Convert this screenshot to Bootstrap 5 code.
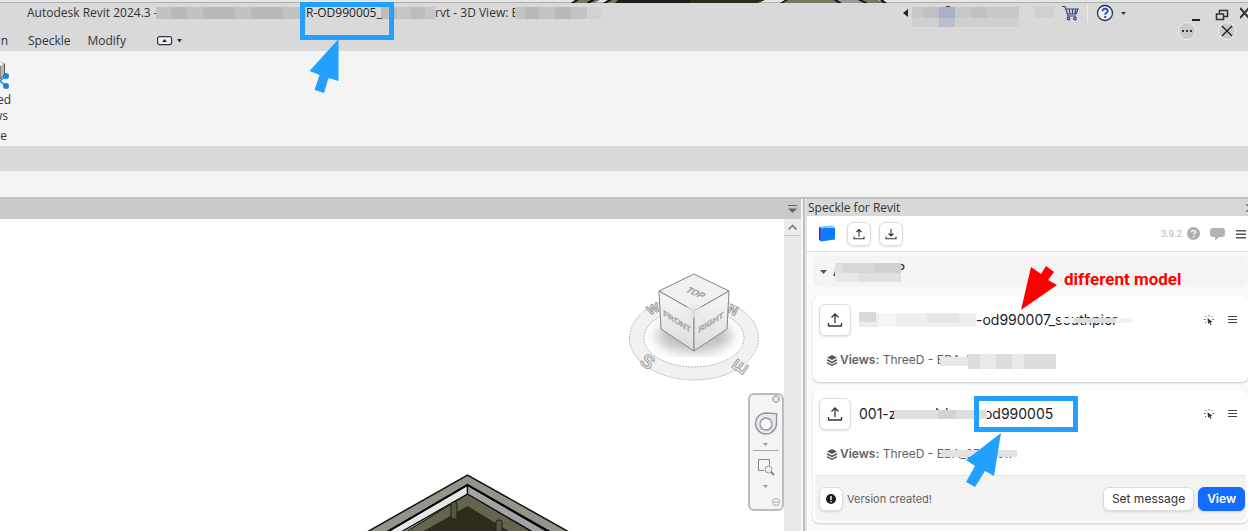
<!DOCTYPE html>
<html lang="en">
<head>
<meta charset="utf-8">
<meta name="viewport" content="width=device-width, initial-scale=1">
<title>Autodesk Revit 2024.3 - Speckle for Revit</title>
<link href="https://cdn.jsdelivr.net/npm/bootstrap@5.3.0/dist/css/bootstrap.min.css" rel="stylesheet">
<style>
  body { font-family: "Open Sans", "Noto Sans", sans-serif; font-size: 12px; line-height: 16px; color: #333; background: #f4f4f4; }
  svg { display: block; flex: none; }
  button { color: inherit; }
  a { color: inherit; text-decoration: none; }
  .bare { background: none; border: 0; padding: 0; display: flex; align-items: center; justify-content: center; }
  .backdrop { height: 3px; background: #e6e6e6; border-bottom: 1px solid #b0b0b0; }
  .app-head { background: #d9d9d9; height: 48px; }
  .title-row { height: 20px; padding-left: 27px; white-space: nowrap; }
  .menu-row { height: 28px; gap: 20px; padding-top: 8px; }
  .title-file { width: 75px; color: #222; }
  .win-tools { height: 20px; }
  .round-btn { width: 18px; height: 18px; border-radius: 50%; background: #cacaca; border: 1px solid #f0f0f0; margin-top: -20px; }
  .ribbon { height: 95px; background: #f4f4f4; }
  .band { height: 25px; background: #d9d9d9; }
  .options { height: 26px; background: #f4f4f4; }
  .work { border-top: 2px solid #c0c0c0; }
  .tab-strip { height: 20px; background: #cacaca; padding-right: 4px; }
  .canvas { background: #fff; }
  .scroller { width: 17px; background: #e8e8e8; }
  .scroller button { width: 17px; height: 17px; border-bottom: 1px solid #ccc; background: #ececec; }
  .gutter { width: 4px; background: #c0c0c0; border-left: 2px solid #f4f4f4; }
  .side { width: 443px; background: #fafafa; border-left: 2px solid #e4e4e4; }
  .side-title { height: 17px; background: #d8d8d8; padding-left: 1px; }
  .panel-font { font-family: Inter, sans-serif; }
  .side-head { height: 36px; background: #fff; border-bottom: 1px solid #dedede; padding: 0 2px 0 12px; }
  .tool-btn { background: #fff; border: 1px solid #dcdcdc; border-radius: 6px; padding: 0; box-shadow: 0 1px 2px rgba(0,0,0,.12); display: flex; align-items: center; justify-content: center; flex: none; }
  .s24 { width: 24px; height: 24px; }
  .s32 { width: 32px; height: 32px; }
  .version { font-size: 9px; color: #b5b5b5; }
  .side-body { padding: 4px 0 0 6px; }
  .group-row { height: 31px; background: #f4f4f4; border-radius: 6px; padding-left: 7px; margin-bottom: 9px; }
  .group-name { font-size: 12px; font-weight: 500; margin-left: 6px; width: 72px; }
  .model-card { background: #fff; border: 1px solid #fff; border-radius: 6px; box-shadow: 0 1px 2px rgba(0,0,0,.2); }
  .model-card + .model-card { margin-top: 8px; }
  .model-main { padding: 7px 9px 0 5px; height: 84px; }
  .model-name { font-size: 14px; line-height: 20px; color: #1c1c1e; white-space: nowrap; }
  .views { margin: 16px 0 0 8px; gap: 3px; color: #626263; white-space: nowrap; }
  .card-foot { background: #f3f3f3; border-top: 1px solid #e6e6e6; height: 46px; padding: 0 1px 0 4px; gap: 4px; margin: 0 1px 1px; border-radius: 0 0 6px 6px; }
  .foot-text { font-size: 11px; color: #626263; }
  .foot-btn { font-size: 12px; line-height: 16px; padding: 3px 8px; border-radius: 6px; height: 24px; }
  .foot-btn.go { background: #136cff; border-color: #136cff; color: #fff; font-weight: 600; }
  .over { position: absolute; overflow: visible; }
  .note { position: absolute; left: 257px; top: 16px; font: 700 17px/22px Roboto, sans-serif; color: #f00; white-space: nowrap; z-index: 3; }
  .ring-box { position: absolute; border: 5px solid #22a0ff; z-index: 3; }
  .nav-tool { position: absolute; right: 0; top: 174px; width: 36px; height: 118px; border: 2px solid #bcbcbc; border-radius: 6px; background: #f4f4f4; }
</style>
</head>
<body class="d-flex flex-column min-vh-100 overflow-hidden">
<svg class="over" style="left:570px;top:0" width="320" height="3" viewBox="570 0 320 3" aria-hidden="true"><path d="M571 3l5-3h24l-6 3zM603 3l5-3h14l-6 3zM780 3l6-3h92l8 3z" fill="#77775f"/><path d="M618 0h75v3h-78z" fill="#1c1c18"/><path d="M690 0h75l-7 3h-68z" fill="#2e2c1b"/><path d="M838 0h22l5 3h-25z" fill="#999"/><path d="M571 3l4-3h4l-5 3zM586 3l5-3h4l-5 3zM603 3l5-3h4l-5 3zM780 3l5-3h3l-5 3zM834 0h3l5 3h-4zM858 0h4l6 3h-4zM880 0h3l4 3h-4z" fill="#111"/></svg>
<div class="backdrop"></div>
<header class="app-head">
  <div class="title-row d-flex align-items-center position-relative">
    <span style="width:129px">Autodesk Revit 2024.3 -</span>
    <svg width="150" height="12" viewBox="0 0 150 12" aria-hidden="true"><path fill="#c2c2c2" d="M0 0h150v12H0z"/><path fill="#b8b8b8" d="M15 0h16v12H15zM47 0h32v12H47zM95 0h32v12H95z"/></svg>
    <span class="title-file position-relative">R-OD990005_
      <span class="ring-box" style="left:-6px;top:-3px;width:94px;height:38px"></span>
      <svg class="over" style="left:3px;top:33px;z-index:3" width="30" height="56" viewBox="309 38 30 56" aria-hidden="true"><path fill="#22a0ff" d="M338.500 39v42l-10-3-4.500 15-9.500-3 5-15-10-4z"/></svg>
    </span>
    <svg width="54" height="12" viewBox="0 0 54 12" aria-hidden="true"><path fill="#c6c6c6" d="M0 0h54v12H0z"/><path fill="#bcbcbc" d="M0 0h16v12H0zM30 0h14v12H30z"/></svg>
    <span style="width:80px">rvt - 3D View: E</span>
    <svg width="86" height="12" viewBox="0 0 86 12" aria-hidden="true"><path fill="#c4c4c4" d="M0 0h72v12H0z"/><path fill="#b8b8b8" d="M10 0h14v12H10zM40 0h16v12H40z"/><path fill="#d2d2d2" d="M72 0h14v12H72z"/></svg>
    <div class="win-tools d-flex align-items-center ms-auto">
      <button class="bare" aria-label="Collapse"><svg width="5" height="8" viewBox="0 0 5 8"><path d="M5 0v8L0 4z" fill="#222"/></svg></button>
      <svg class="ms-1" width="142" height="20" viewBox="0 0 142 20" overflow="visible" aria-hidden="true"><path fill="#c8c8c8" d="M0 4h107v11H0z"/><path fill="#ced0d0" d="M0 15h27v9H0zM43 15h64v9H43z"/><path fill="#a9b1c8" d="M27 4h16v11H27z"/><path fill="#b9bfd0" d="M27 15h16v9H27z"/><path fill="#bfc0c0" d="M11 4h16v11H11zM59 4h16v11H59z"/><path fill="#d0d0d0" d="M123 4h19v11h-19z"/><path fill="#222" d="M33 4q3-2 6 0z"/></svg>
      <button class="bare" style="margin-left:8px" aria-label="Store"><svg width="17" height="16" viewBox="0 0 17 16" fill="none" stroke="#35447d" stroke-width="1.200"><path d="M0 1.500h3l3 9.500h8M4 4h12l-2 5H6M7 4l1 5M10.500 4v5M13.500 4L13 9"/><circle cx="6.500" cy="13.500" r="1.300"/><circle cx="13" cy="13.500" r="1.300"/></svg></button>
      <span class="border-start border-secondary-subtle" style="height:18px;margin:0 8px"></span>
      <button class="bare" aria-label="Help"><svg width="18" height="18" viewBox="0 0 18 18"><circle cx="9" cy="9" r="7.500" fill="#eef1f7" stroke="#26304f" stroke-width="1.300"/><path d="M6.500 7.200c0-3.600 5.400-3.300 5.200-.2 0 1.700-2.500 1.800-2.500 3.700M9.200 12v2" fill="none" stroke="#1c50c0" stroke-width="1.900"/></svg></button>
      <button class="bare" style="margin-left:7px" aria-label="Help menu"><svg width="5" height="3"><path d="M0 0h5L2.500 3z" fill="#333"/></svg></button>
      <button class="bare align-self-end" style="margin-left:66px" aria-label="Minimize"><svg width="9" height="4"><path d="M0 0h8v2H0z" fill="#222"/></svg></button>
      <button class="bare" style="margin-left:14px;margin-top:3px" aria-label="Restore"><svg width="14" height="14" viewBox="0 0 14 14" fill="none" stroke="#333" stroke-width="1.500"><path d="M4.500 6V2.500h8v6H9M1.500 6h7v5.500h-7z"/></svg></button>
      <button class="bare" style="margin-left:11px" aria-label="Close"><svg width="8" height="12" viewBox="0 0 8 12"><path d="M0 1l9 10M9 1L0 11" stroke="#333" stroke-width="2"/></svg></button>
    </div>
  </div>
  <nav class="menu-row d-flex align-items-center">
    <a href="#" class="d-flex justify-content-end" style="width:8px">in</a>
    <a href="#">Speckle</a>
    <a href="#" style="margin-left:-3px">Modify</a>
    <button class="bare" style="margin-left:11px;gap:4px" aria-label="Ribbon display"><svg width="16" height="10" viewBox="0 0 16 10"><rect x=".6" y=".6" width="14" height="8" rx="2" fill="#f0f0f4" stroke="#333a4a" stroke-width="1.200"/><path d="M5 6l2.600-3L10 6z" fill="#222"/></svg><svg width="5" height="4"><path d="M0 0h5L2.500 3.500z" fill="#333"/></svg></button>
    <button class="round-btn bare ms-auto" aria-label="More"><svg width="12" height="4"><path d="M1 1h2v2H1zM5 1h2v2H5zM9 1h2v2H9z" fill="#333"/></svg></button>
    <button class="round-btn bare" style="margin-right:12px;margin-left:2px" aria-label="Close ribbon"><svg width="12" height="12"><path d="M1 1l10 10M11 1L1 11" stroke="#222" stroke-width="1.400"/></svg></button>
  </nav>
</header>
<section class="ribbon">
  <svg width="12" height="44" viewBox="0 51 12 44" aria-hidden="true"><path d="M0 62l4.500 2v11L0 79z" fill="#b9b9b9" stroke="#555"/><path d="M0 61.500l4 2.500-4 2z" fill="#fff"/><path d="M6 76L0 81l6 5" fill="none" stroke="#1a86e0" stroke-width="1.500"/><circle cx="6" cy="76" r="3" fill="#1a86e0"/><circle cx="6" cy="86" r="3" fill="#1a86e0"/></svg>
  <div class="d-flex flex-column align-items-end" style="width:11px;margin-top:-3px"><a href="#">ed</a><a href="#" style="margin-right:3px">ws</a><span style="margin:4px 4px 0 0">re</span></div>
</section>
<div class="band"></div>
<div class="options"></div>
<main class="work d-flex flex-grow-1">
  <section class="d-flex flex-column flex-grow-1">
    <div class="tab-strip d-flex align-items-center justify-content-end"><button class="bare" aria-label="View list"><svg width="9" height="8"><path d="M0 0h9v1H0zM0 3.500h9L4.500 8z" fill="#666"/></svg></button></div>
    <div class="d-flex flex-grow-1">
      <div class="canvas flex-grow-1 position-relative">
        <svg class="over" style="right:20px;top:49px" width="140" height="118" viewBox="624 268 140 118" role="img" aria-label="View cube">
          <defs><filter id="soft"><feGaussianBlur stdDeviation="6"/></filter><linearGradient id="face" x2="0" y2="1"><stop stop-color="#f7f7f7"/><stop offset="1" stop-color="#dcdcdc"/></linearGradient></defs>
          <path fill="#f1f1f1" stroke="#b9b9b9" stroke-dasharray="2 1" fill-rule="evenodd" d="M629.500 338a64.500 42 0 0 1 129 0a64.500 42 0 0 1-129 0zM644 338a50 29 0 0 0 100 0a50 29 0 0 0-100 0z"/>
          <ellipse cx="694" cy="336" rx="38" ry="17" fill="#999" opacity=".6" filter="url(#soft)"/>
          <g font-family="Liberation Sans" font-weight="700" font-size="19" fill="#e2e2e2" stroke="#999" stroke-width=".8" text-anchor="middle"><text transform="translate(644 367) rotate(35)">S</text><text transform="translate(738 369) rotate(-55)" x="3" y="7">E</text><text font-size="13" transform="translate(655 313) rotate(-25)">W</text><text font-size="13" transform="translate(731 314) rotate(25)">N</text></g>
          <g stroke="#858585" stroke-linejoin="round"><path fill="#f1f1f1" d="M694 274l35 17-35 20-35-20z"/><path fill="url(#face)" d="M659 291l35 20v40l-33-22z"/><path fill="url(#face)" d="M729 291l-35 20v40l33-22z"/></g>
          <path fill="#e2e5e8" d="M694 303l7 4v7l-7 4-7-4v-7z" opacity=".7"/>
          <g font-family="Liberation Sans Narrow, Liberation Sans" font-weight="700" font-size="8" fill="#a3a7ac" stroke="#a3a7ac" stroke-width=".3" text-anchor="middle"><text transform="translate(677 324) skewY(32)">FRONT</text><text transform="translate(711 325) skewY(-32)">RIGHT</text><text font-size="9" transform="translate(693 295) rotate(24) skewX(-25)">TOP</text></g>
        </svg>
        <div class="nav-tool d-flex flex-column align-items-center">
          <svg width="32" height="114" viewBox="750 395 32 114" role="img" aria-label="Navigation bar"><g fill="none" stroke="#aaa"><circle cx="776" cy="399" r="3.500" fill="#ccc"/><path d="M774 397l4 4M778 397l-4 4" stroke="#fff"/><path d="M776.500 413.500v10a10.500 10.500 0 1 1-10.500-10.500z" fill="#e6e8ec" stroke="#8f949b" stroke-width="1.300"/><circle cx="766" cy="424" r="6" fill="#f7f7f7" stroke="#8f949b" stroke-width="1.300"/><path d="M761 429l-3 3M771 429l3 3M753 450.500h26"/><path d="M764 470.500h-5.500v-11h11v6" stroke="#888"/><circle cx="768.500" cy="469.500" r="3.500" fill="#eee" stroke="#999"/><path d="M771 472l3 3" stroke="#888" stroke-width="2"/><circle cx="776" cy="502" r="3.500"/><path d="M774 502h4"/></g><path d="M763 443h5l-2.500 3zM763 485h5l-2.500 3z" fill="#999"/></svg>
        </div>
        <svg class="over" style="left:366px;bottom:0" width="204" height="59" viewBox="366 472 204 59" role="img" aria-label="3D model roof">
          <path fill="#94948a" stroke="#111" stroke-width="1.500" d="M367 532l100.500-57L569 532z"/>
          <path fill="#65654f" stroke="#111" d="M406 532l61.500-38 64.500 38z"/>
          <path fill="#e6e6e6" stroke="#111" stroke-width="1.300" d="M387 532l80.500-47v9L401 532z"/><path fill="#a3a3a3" stroke="#111" stroke-width="1.300" d="M548 532l-80.500-47v9L533 532z"/>
          <path d="M387 532l80.500-47L550 532" fill="none" stroke="#000" stroke-width="2"/>
          <path fill="#2e2c1b" d="M422 532l45.500-26 43 26z"/><g fill="#555543" stroke="#222217"><rect x="451" y="502" width="6" height="17" rx="2"/><rect x="496" y="520" width="6" height="13" rx="2"/></g>
        </svg>
      </div>
      <div class="scroller"><button class="bare" aria-label="Scroll up"><svg width="9" height="6"><path d="M.5 5.500l4-4 4 4" fill="none" stroke="#888" stroke-width="1.800"/></svg></button></div>
    </div>
  </section>
  <div class="gutter"></div>
  <aside class="side">
    <div class="side-title d-flex align-items-center justify-content-between"><span>Speckle for Revit</span><button class="bare" aria-label="Close panel"><svg width="2" height="8"><path d="M0 0l4 4-4 4" stroke="#444" fill="none"/></svg></button></div>
    <div class="panel-font">
      <div class="side-head d-flex align-items-center">
        <svg width="16" height="17" viewBox="0 0 17 17" role="img" aria-label="Speckle"><path fill="#0a7cff" d="M2 3l15-1v13L2 17z"/><path fill="#3034c8" d="M0 1l2 2v14l-2-2z"/><path fill="#7cc2f8" d="M0 1l14-1 3 2-15 1z"/></svg>
        <button class="tool-btn s24 ms-auto" style="margin-left:12px!important" aria-label="Publish"><svg width="12" height="12" viewBox="0 0 12 12" fill="none" stroke="#333" stroke-width="1.100"><path d="M6 8.500V1.500M3.500 4L6 1.500 8.500 4M1 8.500v2.200h10V8.500"/></svg></button>
        <button class="tool-btn s24 ms-2" aria-label="Load"><svg width="12" height="12" viewBox="0 0 12 12" fill="none" stroke="#333" stroke-width="1.100"><path d="M6 1v7M3.500 5.500L6 8l2.500-2.500M1 8.500v2.200h10V8.500"/></svg></button>
        <span class="version ms-auto">3.9.2</span>
        <button class="bare" style="margin-left:5px" aria-label="Help"><svg width="13" height="13" viewBox="0 0 13 13"><circle cx="6.500" cy="6.500" r="6.500" fill="#adadad"/><path d="M4.600 5.200c0-2.600 4-2.400 3.900-.1 0 1.300-1.900 1.400-1.900 2.700M6.600 9v1.500" fill="none" stroke="#fff" stroke-width="1.300"/></svg></button>
        <button class="bare" style="margin-left:10px" aria-label="Feedback"><svg width="15" height="14" viewBox="0 0 15 14"><path d="M3 1h9q3 0 3 3v3q0 3-3 3H9.500L5 13.500V10H3Q0 10 0 7V4q0-3 3-3z" fill="#b3b3b3"/></svg></button>
        <button class="bare" style="margin-left:11px" aria-label="Menu"><svg width="10" height="10"><path d="M0 1h10v1.500H0zM0 4.500h10V6H0zM0 8h10v1.500H0z" fill="#555"/></svg></button>
      </div>
      <div class="side-body position-relative">
        <div class="group-row d-flex align-items-center">
          <svg width="7" height="4"><path d="M0 0h7L3.500 4z" fill="#555"/></svg>
          <span class="group-name d-flex justify-content-between position-relative"><span>A</span><span style="margin-top:-3px">P</span>
            <svg class="over" style="left:2px;top:-1px" width="66" height="19" viewBox="0 0 66 19" aria-hidden="true"><path fill="#dfe0e0" d="M0 0h66v19H0z"/><path fill="#d6d7d7" d="M8 0h32v10H8z"/><path fill="#cfd2d5" d="M40 0h26v10H40z"/><path fill="#e8e8e8" d="M0 10h24v9H0z"/></svg></span>
        </div>
        <span class="note">different model</span>
        <svg class="over" style="left:213px;top:12px;z-index:3" width="38" height="48" viewBox="1020 264 38 48" aria-hidden="true"><path d="M1021 310l10-43 10 7 5-8 8 6-6 8 9 5z" fill="#f00"/></svg>
        <article class="model-card">
          <div class="model-main">
            <div class="d-flex align-items-center">
              <button class="tool-btn s32 me-2" aria-label="Publish model"><svg width="16" height="16" viewBox="0 0 16 16" fill="none" stroke="#333" stroke-width="1.300"><path d="M8 11V2M4.500 5.500L8 2l3.500 3.500M1.500 11v3h13v-3"/></svg></button>
              <svg width="117" height="16" viewBox="0 0 117 16" aria-hidden="true"><path fill="#efefef" d="M16 1h101v14H16z"/><path fill="#ddd8d8" d="M0 0h17v10H0z"/><path fill="#ececec" d="M0 10h17v5H0z"/><path fill="#e4e6e6" d="M68 2h32v9H68z"/><path fill="#f6f7f7" d="M20 1h17v14H20z"/></svg>
              <span class="model-name position-relative">-od990007_southpier<svg class="over" style="left:84px;top:8px" width="72" height="5" viewBox="0 0 72 5" aria-hidden="true"><path fill="#f2f2f2" d="M0 0h72v5H0z"/><path fill="#ddd" d="M14 0h42v5H14z"/></svg></span>
              <button class="bare ms-auto" aria-label="Highlight"><svg width="10" height="10" viewBox="0 0 10 10"><path d="M3.500 3l5 4-2 .3L7.500 9.500l-1 .4-1-2.200-1.500 1z" fill="#333"/><path d="M5 0v1.300M1.500 1l.8.900M8.500 1l-.8.900M0 4.500h1.500M8.500 4.500H10M1 8l1-.8" stroke="#555"/></svg></button>
              <button class="bare" style="margin-left:14px" aria-label="Model menu"><svg width="10" height="8"><path d="M0 0h9v1H0zM0 3h9v1H0zM0 6h9v1H0z" fill="#444"/></svg></button>
            </div>
            <div class="views d-flex align-items-center position-relative"><svg width="10" height="11" viewBox="0 0 10 11"><path d="M5 0l5 2.500L5 5 0 2.500zM0 4l5 2.500L10 4v1.800L5 8.300 0 5.800zM0 6.900l5 2.500 5-2.500v1.600L5 11 0 8.500z" fill="#555"/></svg><span><strong class="fw-semibold">Views:</strong> ThreeD - EDA_t</span>
              <svg class="over" style="left:113px;top:0" width="116" height="17" viewBox="0 0 116 17" aria-hidden="true"><path fill="#e8e8e8" d="M0 5h28v9H0z"/><path fill="#dcdcdc" d="M28 2h88v15H28z"/><path fill="#e9e9e9" d="M40 2h16v15H40zM72 2h12v15H72z"/></svg></div>
          </div>
        </article>
        <article class="model-card">
          <div class="model-main">
            <div class="d-flex align-items-center">
              <button class="tool-btn s32 me-2" aria-label="Publish model"><svg width="16" height="16" viewBox="0 0 16 16" fill="none" stroke="#333" stroke-width="1.300"><path d="M8 11V2M4.500 5.500L8 2l3.500 3.500M1.500 11v3h13v-3"/></svg></button>
              <span class="model-name position-relative">001-zuid-a3dmod-od990005<svg class="over" style="left:35px;top:4px" width="93" height="11" viewBox="0 0 93 11" aria-hidden="true"><path fill="#fff" d="M0-1h42v3H0zM66-1h22v3H66z"/><path fill="#dedede" d="M0 2h93v9H0z"/><path fill="#d2d2d2" d="M44 2h18v9H44z"/></svg>
                <span class="ring-box" style="right:-25px;top:-8px;width:104px;height:36px"></span>
              </span>
              <button class="bare ms-auto" aria-label="Highlight"><svg width="10" height="10" viewBox="0 0 10 10"><path d="M3.500 3l5 4-2 .3L7.500 9.500l-1 .4-1-2.200-1.500 1z" fill="#333"/><path d="M5 0v1.300M1.500 1l.8.900M8.500 1l-.8.900M0 4.500h1.500M8.500 4.500H10M1 8l1-.8" stroke="#555"/></svg></button>
              <button class="bare" style="margin-left:14px" aria-label="Model menu"><svg width="10" height="8"><path d="M0 0h9v1H0zM0 3h9v1H0zM0 6h9v1H0z" fill="#444"/></svg></button>
            </div>
            <div class="views d-flex align-items-center position-relative"><svg width="10" height="11" viewBox="0 0 10 11"><path d="M5 0l5 2.500L5 5 0 2.500zM0 4l5 2.500L10 4v1.800L5 8.300 0 5.800zM0 6.900l5 2.500 5-2.500v1.600L5 11 0 8.500z" fill="#555"/></svg><span><strong class="fw-semibold">Views:</strong> ThreeD - EDA_3D_View</span>
              <svg class="over" style="left:114px;top:4px" width="76" height="7" viewBox="0 0 76 7" aria-hidden="true"><path fill="#e2e2e2" d="M0 0h76v7H0z"/></svg>
              <svg class="over" style="left:139px;top:-13px;z-index:3" width="36" height="54" viewBox="965 433 36 54" aria-hidden="true"><path d="M1000 433l-7 43-9-5-10 16-9-5 9-16-9-6z" fill="#22a0ff"/></svg></div>
          </div>
          <div class="card-foot d-flex align-items-center">
            <button class="tool-btn s24" aria-label="Status"><svg width="10" height="10"><circle cx="5" cy="5" r="5" fill="#1c1c1e"/><path d="M4.300 2h1.400v4H4.300zM4.300 7h1.400v1.300H4.300z" fill="#fff"/></svg></button>
            <span class="foot-text">Version created!</span>
            <button class="tool-btn foot-btn ms-auto">Set message</button>
            <button class="tool-btn foot-btn go">View</button>
          </div>
        </article>
      </div>
    </div>
  </aside>
</main>
<script src="https://cdn.jsdelivr.net/npm/bootstrap@5.3.0/dist/js/bootstrap.bundle.min.js"></script>
</body>
</html>
